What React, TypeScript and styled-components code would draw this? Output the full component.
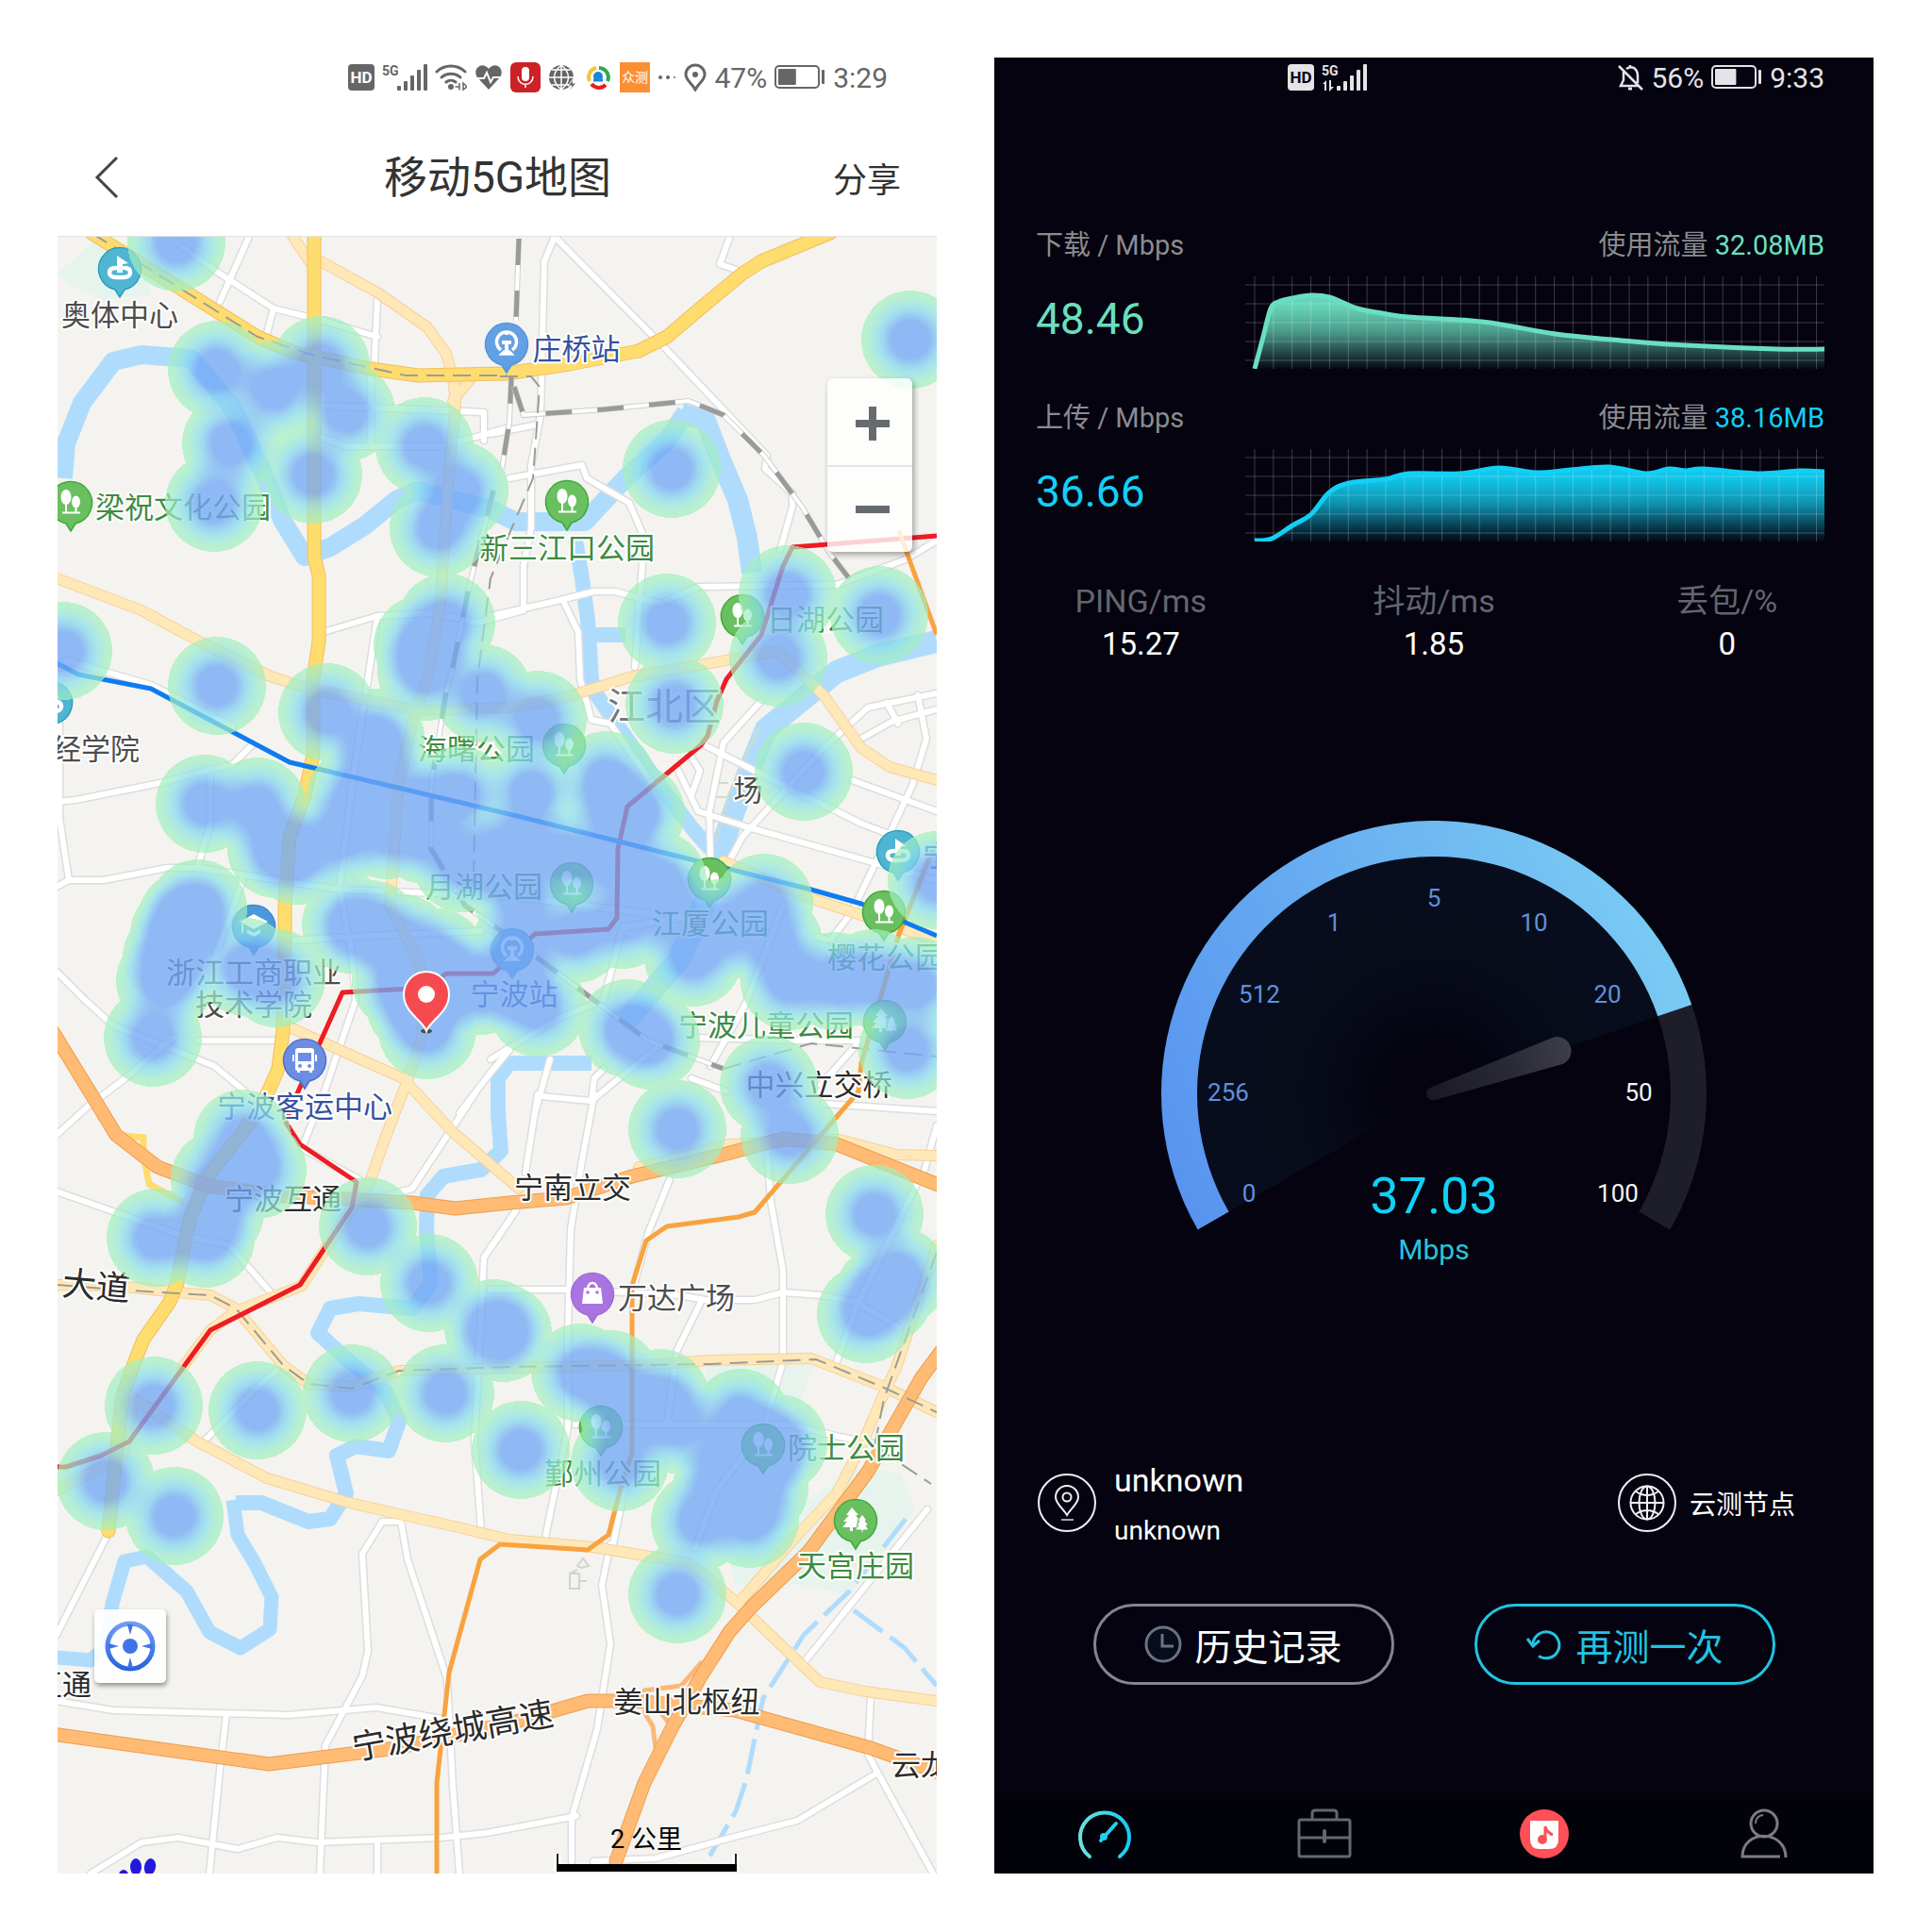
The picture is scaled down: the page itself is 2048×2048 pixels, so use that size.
import React from 'react';
import styled, { createGlobalStyle } from 'styled-components';

type Point = [number, number];
type PinKind = 'sport' | 'station' | 'tree' | 'pine' | 'school' | 'bus' | 'bag';

const GREEN = '#3d8b40';
const NAVY = '#3550a0';
const DARK = '#2b2b2b';
const GREY = '#4d4d4d';

const WATER = [
  { w: 20, d: '67,507 70,470 87,427 120,383 150,376 203,380 247,433 277,497 300,553 323,590 350,580 387,557 420,530 443,520 520,540 547,553 620,553 663,507 707,467 727,437' },
  { w: 22, d: '722,438 748,446 765,490 782,530 792,570 797,607' },
  { w: 16, d: '610,573 617,613 623,657 627,720 630,733 653,767 700,833 733,877 753,900' },
  { w: 16, d: '630,673 663,673' },
  { w: 24, d: '993,680 930,695 887,712 850,742 812,773 793,820 778,860 767,893 750,950 720,1017 663,1083' },
  { w: 16, d: '627,1127 540,1127 528,1143 528,1180 531,1220 510,1240 470,1247 453,1267 452,1303 457,1360 437,1387 380,1382 350,1387 337,1413 370,1443 410,1477 423,1507 412,1538 377,1533 357,1543 367,1583 350,1610 327,1613 277,1593 250,1593' },
  { w: 15, d: '247,1590 252,1627 270,1657 288,1693 286,1727 255,1747 222,1730 198,1687 156,1650 132,1655 119,1700 113,1745 96,1760 60,1757' },
];

const STREAMS = ['960,1610 900,1687 852,1733 809,1800 791,1887 780,1920 749,1973', '905,1707 959,1747 993,1787'];

const STREETS = [
  '263,253 233,320', '187,257 233,290 290,327 343,340 400,357', '290,327 282,357', '400,317 397,383',
  '343,430 513,437 513,467', '340,463 367,473 470,473 540,453', '393,400 393,473',
  '343,670 400,653 460,650 507,660 555,647', '400,653 390,720 373,833 360,940 373,1013 377,1060 343,1160 320,1217',
  '587,253 577,277 573,440 563,493 563,560 555,600 555,647', '590,253 703,367 813,483 811,497 840,523 840,537 827,583',
  '773,253 763,280 783,287', '520,460 570,450', '540,507 617,493 622,507 667,533 683,570 673,707',
  '520,653 590,637 630,627 652,627 700,640 740,622 887,620 960,593 993,573', '597,637 613,670 615,720 627,763 647,767 690,830',
  '717,813 740,860 793,877 993,933', '747,790 800,817 887,860 913,873 950,887', '733,803 742,817 733,843',
  '753,907 752,860 767,787 807,743', '773,913 787,887 873,793 920,750 993,735', '940,745 952,767',
  '973,737 982,783 967,833 940,890 903,967 880,997 867,993', '913,783 945,765 993,752', '903,827 993,860',
  '520,1123 590,1080 640,1060 660,983 740,970', '627,1167 700,1107', '567,1180 583,1123', '573,1162 627,1167 630,1143 640,1133',
  '733,1143 770,1157', '740,1100 847,1103 910,1103', '870,1150 910,1105', '873,1170 993,1178', '753,1130 790,1065 830,960',
  '60,850 80,848 170,830 247,810 267,790', '63,767 63,867 73,933', '60,940 73,933 110,933 177,920 210,920 360,943 540,950 700,970',
  '223,823 223,873 210,917', '70,700 160,726 247,770', '60,1030 90,1060 120,1087 170,1107 227,1130 260,1157', '210,1103 290,1103',
  '93,1173 133,1143 183,1100', '257,933 227,1017', '310,997 370,993 510,987', '540,1113 520,1137 487,1180',
  '503,1160 437,1260 400,1270', '60,1203 93,1173', '60,1263 193,1310 243,1320 287,1370', '320,1217 380,1250',
  '217,1527 273,1470 293,1453', '547,1283 513,1333 510,1393 503,1527 510,1623', '405,1613 384,1647 390,1750 384,1777 345,1850 339,1986',
  '405,1613 425,1613 432,1653 474,1780 480,1893 487,1986', '60,1803 120,1813 306,1818 399,1810 474,1823', '240,1817 234,1867 222,1986',
  '96,1986 150,1953 189,1948 252,1960 294,1948 336,1953 468,1948 516,1943 611,1925', '400,1950 400,1986',
  '647,1637 638,1680 647,1743 633,1833 606,1927 606,1973', '983,1600 854,1760', '923,1797 920,1860 989,1986',
  '929,1880 845,1930 779,1947 695,1970 629,1973', '114,1627 60,1733', '570,1160 557,1243',
  '630,1160 617,1230 605,1303 602,1413 602,1513 578,1630', '710,1250 687,1307 670,1370', '520,1323 547,1283',
  '520,1367 603,1367 720,1373 747,1378 800,1378 830,1370 870,1373 907,1380 953,1407', '743,1380 717,1433 707,1510',
  '813,1220 817,1273 830,1347 830,1443 810,1513 760,1580 737,1640', '973,1253 910,1380 887,1443', '993,1193 980,1240',
  '663,1573 650,1637', '610,1510 837,1510 890,1523 925,1530',
];

const CREAM = [
  '340,277 400,310 453,347 473,375 480,400 483,427 477,490 472,557 467,640 453,720 440,753 422,833 417,917 413,960 443,1017 452,1050 447,1100 430,1150 407,1210 392,1253',
  '310,250 330,280', '60,613 150,647 217,683 287,717 327,730 393,743 440,753 540,750 597,740 667,718 753,703 825,690 873,737 913,793 943,813 993,827',
  '303,1087 360,1113 427,1143 480,1200 550,1260', '60,1362 123,1363 188,1370 223,1373 250,1387 300,1447 327,1467 373,1470 423,1453 540,1450 687,1447 753,1442 860,1440 937,1470 993,1497',
  '392,1253 373,1280 320,1363 250,1390 223,1410 193,1450', '60,1580 130,1543 143,1483', '143,1483 207,1527 283,1567 370,1593 490,1620 540,1632 629,1640 731,1657 779,1697 869,1783 917,1793 993,1803',
  '993,1320 950,1450 937,1477 913,1533 887,1583 840,1633 785,1697', '767,913 853,950 913,970 993,997', '677,1237 773,1213 890,1208 950,1224 993,1225', '480,425 500,400',
];

const YELLOW = [
  '333,245 333,590 338,610 338,680 332,720 332,800 323,843 307,887 302,960 302,990 300,1093 295,1133 283,1160 267,1187 220,1247 203,1287 197,1310 188,1360 180,1380 152,1420 143,1443 130,1480 123,1543 115,1623',
  '97,247 193,307 273,357 310,373 393,391 443,398 537,396 603,386 677,372 707,357 747,323 787,290 807,277 880,247',
];

const HIGHWAYS = [
  '55,1092 103,1170 123,1203 167,1237 220,1257 293,1267 437,1275 483,1281 540,1275 600,1270 670,1247 770,1223 830,1207 887,1213 997,1257',
  '997,1433 977,1460 920,1560 857,1645 797,1703 773,1730 743,1777 713,1830 683,1890 653,1973',
  '55,1838 285,1870 420,1853 540,1827 623,1803 671,1803 779,1813 923,1853 998,1880',
];

const RAMPS = ['683,1792 722,1787 743,1763', '683,1815 692,1830 695,1853', '700,1815 712,1830'];

const RAILS = [
  '550,253 547,340', '542,400 540,447 532,497', '523,520 497,623 480,707 473,733 457,833 457,900 493,960 540,993 580,1023 643,1070 687,1103 767,1133',
  '545,410 555,440 640,434 730,425 767,440 810,483 850,537 880,587 900,613',
];

const THIN_RAILS = [
  '97,247 193,307 273,357 330,376 430,398 537,398', '530,399 563,399 572,410 565,507 520,613 506,720 502,930',
  '60,1362 123,1367 188,1371 223,1373 250,1387 300,1447 327,1467 373,1472 423,1453 540,1449 753,1446 865,1441 937,1471 993,1497',
  '993,1327 937,1483 927,1533 987,1573', '767,1133 860,1106 993,1120',
];

const METRO = [
  { color: '#ee1c25', w: 5, d: '993,568 840,580 830,600 807,673 770,720 760,743 750,780 743,790 713,815 665,855 655,900 654,973 645,985 567,990 523,1032 473,1032 453,1047 363,1052 308,1175 303,1190 318,1213 378,1253 373,1280 318,1362 223,1410 137,1528 107,1543 70,1555 60,1555' },
  { color: '#f9a33f', w: 5, d: '953,563 993,673' },
  { color: '#f9a33f', w: 5, d: '993,890 953,990 913,1127 910,1157 800,1285 783,1290 707,1300 685,1315 670,1363 670,1540 660,1570 645,1627 623,1643 530,1637 509,1653 476,1773 463,1890 463,1986' },
  { color: '#0f7bf0', w: 5, d: '60,703 83,715 160,730 307,808 540,863 740,913 860,943 913,958 993,992' },
];

const PARKS = ['60,290 100,255 150,262 160,312 110,318 70,300', '750,1447 863,1447 847,1490 745,1482', '915,1555 955,1562 970,1600 935,1650 900,1690 850,1680 780,1680 770,1640'];

const LABELS: { t: string; x: number; y: number; c: string; s?: number; a?: 'start' | 'end'; r?: number }[] = [
  { t: '奥体中心', x: 127, y: 345, c: GREY },
  { t: '梁祝文化公园', x: 194, y: 549, c: GREEN },
  { t: '庄桥站', x: 611, y: 381, c: NAVY },
  { t: '新三江口公园', x: 601, y: 592, c: GREEN },
  { t: '日湖公园', x: 875, y: 668, c: GREEN },
  { t: '海曙公园', x: 505, y: 805, c: GREEN },
  { t: '江北区', x: 704, y: 763, c: '#777', s: 40 },
  { t: '场', x: 793, y: 849, c: GREY },
  { t: '经学院', x: 148, y: 805, c: GREY, a: 'end' },
  { t: '月湖公园', x: 513, y: 951, c: GREEN },
  { t: '江厦公园', x: 753, y: 990, c: GREEN },
  { t: '浙江工商职业', x: 269, y: 1042, c: GREY },
  { t: '技术学院', x: 269, y: 1076, c: GREY },
  { t: '宁波站', x: 545, y: 1065, c: NAVY },
  { t: '宁波客运中心', x: 323, y: 1184, c: NAVY },
  { t: '宁波儿童公园', x: 812, y: 1098, c: GREEN },
  { t: '中兴立交桥', x: 868, y: 1161, c: DARK },
  { t: '樱花公园', x: 939, y: 1026, c: GREEN },
  { t: '宁', x: 978, y: 918, c: NAVY, a: 'start' },
  { t: '宁波互通', x: 300, y: 1282, c: DARK },
  { t: '宁南立交', x: 607, y: 1270, c: DARK },
  { t: '大道', x: 101, y: 1376, c: DARK, s: 36, r: 5 },
  { t: '万达广场', x: 717, y: 1387, c: GREY },
  { t: '鄞州公园', x: 639, y: 1573, c: GREEN },
  { t: '院士公园', x: 897, y: 1546, c: GREEN },
  { t: '天宫庄园', x: 907, y: 1671, c: GREEN },
  { t: '姜山北枢纽', x: 728, y: 1815, c: DARK },
  { t: '宁波绕城高速', x: 482, y: 1847, c: DARK, s: 36, r: -10 },
  { t: '云龙', x: 945, y: 1882, c: DARK, a: 'start' },
  { t: '互通', x: 97, y: 1797, c: DARK, a: 'end' },
];

const PINS: { k: PinKind; x: number; y: number }[] = [
  { k: 'sport', x: 127, y: 285 }, { k: 'station', x: 537, y: 365 }, { k: 'tree', x: 75, y: 533 },
  { k: 'tree', x: 601, y: 532 }, { k: 'tree', x: 787, y: 653 }, { k: 'tree', x: 598, y: 790 },
  { k: 'tree', x: 606, y: 937 }, { k: 'tree', x: 752, y: 932 }, { k: 'sport', x: 952, y: 903 },
  { k: 'tree', x: 937, y: 967 }, { k: 'station', x: 543, y: 1007 }, { k: 'pine', x: 938, y: 1083 },
  { k: 'school', x: 269, y: 982 }, { k: 'bus', x: 323, y: 1124 }, { k: 'sport', x: 54, y: 745 },
  { k: 'bag', x: 628, y: 1372 }, { k: 'tree', x: 637, y: 1513 }, { k: 'tree', x: 809, y: 1532 },
  { k: 'pine', x: 907, y: 1612 },
];

const PIN_COLORS: Record<PinKind, [string, string]> = {
  sport: ['#4fb5d2', '#2b9cbd'], station: ['#62a0e3', '#5592da'], tree: ['#6abf60', '#39ab36'], pine: ['#6abf60', '#39ab36'],
  school: ['#4a97dc', '#3a86cc'], bus: ['#6b8ee3', '#4b6fcb'], bag: ['#a974e0', '#9f6adb'],
};

const HEAT: Point[] = [
  [187, 257], [230, 392], [290, 413], [340, 387], [367, 437], [245, 470], [227, 533], [332, 503], [450, 473], [487, 520],
  [465, 560], [473, 660], [448, 683], [452, 712], [67, 690], [230, 727], [347, 755], [965, 360], [712, 497], [707, 660],
  [835, 630], [825, 697], [932, 652], [512, 735], [398, 782], [400, 810], [217, 852], [273, 855], [293, 900], [315, 907],
  [377, 845], [410, 880], [360, 887], [487, 843], [443, 850], [450, 885], [490, 915], [527, 912], [210, 963], [190, 990],
  [198, 975], [175, 1040], [182, 1015], [162, 1100], [372, 980], [393, 985], [427, 1000], [463, 1015], [425, 1040], [453, 1092],
  [440, 1065], [260, 1025], [293, 1037], [510, 1045], [477, 1045], [570, 763], [563, 840], [715, 747], [852, 818], [643, 827],
  [653, 860], [674, 862], [603, 907], [653, 917], [697, 933], [553, 895], [660, 975], [610, 990], [553, 950], [553, 1000],
  [545, 1043], [570, 1068], [712, 967], [810, 957], [770, 983], [735, 1015], [820, 1000], [837, 1040], [885, 1040], [925, 1037],
  [970, 1045], [962, 1113], [993, 933], [665, 1090], [690, 1103], [815, 1150], [718, 1197], [837, 1203], [927, 1287], [953, 1353],
  [937, 1372], [918, 1393], [523, 1408], [533, 1413], [615, 1455], [647, 1462], [700, 1482], [667, 1500], [717, 1510], [785, 1503],
  [825, 1530], [810, 1537], [770, 1545], [657, 1550], [552, 1537], [742, 1613], [795, 1610], [805, 1577], [765, 1577], [718, 1690],
  [257, 1207], [273, 1240], [233, 1250], [165, 1312], [218, 1313], [228, 1285], [390, 1300], [455, 1360], [163, 1490], [273, 1495],
  [373, 1477], [472, 1477], [112, 1570], [185, 1607],
];

// intensity -> colour ramp of the heat layer
const RAMP: { at: number; rgb: [number, number, number] }[] = [
  { at: 0, rgb: [164, 240, 186] },
  { at: 0.04, rgb: [160, 238, 196] },
  { at: 0.14, rgb: [138, 222, 236] },
  { at: 0.24, rgb: [125, 192, 243] },
  { at: 0.34, rgb: [114, 167, 245] },
  { at: 1, rgb: [114, 167, 245] },
];

function rampTable(channel: 0 | 1 | 2) {
  const out: string[] = [];
  for (let i = 0; i <= 50; i++) {
    const v = i / 50;
    const k = Math.max(1, RAMP.findIndex((s) => s.at >= v));
    const a = RAMP[k - 1];
    const b = RAMP[k];
    const t = (v - a.at) / (b.at - a.at);
    out.push(((a.rgb[channel] + (b.rgb[channel] - a.rgb[channel]) * t) / 255).toFixed(3));
  }
  return out.join(' ');
}

// hard outer edge, then slightly more opaque towards the hot cores
const MASK_TABLE = Array.from({ length: 200 }, (_, i) =>
  i < 1 ? 0 : (0.7 + 0.08 * Math.min(1, i / 60)).toFixed(3)
).join(' ');

function PinGlyph({ kind }: { kind: PinKind }) {
  switch (kind) {
    case 'tree':
      return (
        <g fill="#fff">
          <ellipse cx="-5" cy="-6" rx="5.5" ry="8" />
          <ellipse cx="5.5" cy="-1" rx="4.5" ry="6.5" />
          <path d="M-6 0h2v10h-2zM4.500 3h2v7h-2zM-9 9.500h19v2h-19z" />
        </g>
      );
    case 'pine':
      return (
        <g fill="#fff">
          <path d="M-4-14l7 8h-3l5 7h-4l5 6h-9v4h-3v-4h-8l5-6h-4l6-7h-3z" />
          <path d="M7-7l5 7h-2l4 5h-3l3 5h-6v3h-2v-3h-7l4-5h-2l3-5h-2z" stroke="#5fb655" strokeWidth="1" />
        </g>
      );
    case 'sport':
      return (
        <g>
          <path d="M-4-1c-5 0-7 2-7 5s3 5 7 5h8c4 0 7-2 7-5s-2-5-6-5" fill="none" stroke="#fff" strokeWidth="4.500" strokeLinecap="round" />
          <path d="M-3 4V-14l12 8-6 1v9z" fill="#fff" />
        </g>
      );
    case 'station':
      return (
        <g fill="none" stroke="#fff" strokeWidth="3.500">
          <path d="M-6 6a10.500 10.500 0 1 1 12 0" />
          <path d="M-5-2H5M0-1V8" strokeWidth="4" />
          <path d="M-7 11L-3 7H3L7 11z" fill="#fff" strokeWidth="1.500" />
          <path d="M0-10v-4" />
        </g>
      );
    case 'school':
      return (
        <g fill="#fff">
          <path d="M0-13L15-5 0 3-15-5z" />
          <path d="M-7 3l7 4 7-4v4l-7 4-7-4zM-13-3h2V7h-2z" />
        </g>
      );
    case 'bus':
      return (
        <g>
          <path d="M-7-13H7q3 0 3 3V9q0 2-2 2v2H5v-2H-5v2h-3v-2q-2 0-2-2V-10q0-3 3-3z" fill="#fff" />
          <path d="M-12-6v7M12-6v7" stroke="#fff" strokeWidth="2" />
          <rect x="-7" y="-8" width="14" height="9" fill="#6b8ee3" />
          <circle cx="-5" cy="6" r="2" fill="#6b8ee3" />
          <circle cx="5" cy="6" r="2" fill="#6b8ee3" />
        </g>
      );
    default:
      return (
        <g>
          <path d="M-9-7H9l2 17h-22z" fill="#fff" />
          <path d="M-5-6a5 6 0 0 1 10 0" fill="none" stroke="#fff" strokeWidth="2.500" />
          <circle cx="-5" cy="-2" r="1.800" fill="#a974e0" />
          <circle cx="5" cy="-2" r="1.800" fill="#a974e0" />
        </g>
      );
  }
}

function Lines({ items, color, width }: { items: string[]; color: string; width: number }) {
  return (
    <g fill="none" stroke={color} strokeWidth={width} strokeLinejoin="round" strokeLinecap="round">
      {items.map((d) => (
        <polyline key={d} points={d} />
      ))}
    </g>
  );
}

function CoverageMap() {
  return (
    <MapCanvas viewBox="61 251 932 1735" role="img" aria-label="移动5G地图">
      <defs>
        <radialGradient id="spot">
          <stop offset="0" stopColor="#fff" stopOpacity="0.5" />
          <stop offset="0.38" stopColor="#fff" stopOpacity="0.34" />
          <stop offset="0.55" stopColor="#fff" stopOpacity="0.2" />
          <stop offset="0.7" stopColor="#fff" stopOpacity="0.12" />
          <stop offset="0.85" stopColor="#fff" stopOpacity="0.055" />
          <stop offset="0.95" stopColor="#fff" stopOpacity="0.022" />
          <stop offset="1" stopColor="#fff" stopOpacity="0.012" />
        </radialGradient>
        <filter id="heat" filterUnits="userSpaceOnUse" x="0" y="190" width="1060" height="1860" colorInterpolationFilters="sRGB">
          <feColorMatrix in="SourceGraphic" type="matrix" values="0 0 0 1 0  0 0 0 1 0  0 0 0 1 0  0 0 0 0 1" />
          <feComponentTransfer result="tint">
            <feFuncR type="table" tableValues={rampTable(0)} />
            <feFuncG type="table" tableValues={rampTable(1)} />
            <feFuncB type="table" tableValues={rampTable(2)} />
          </feComponentTransfer>
          <feComponentTransfer in="SourceGraphic" result="mask">
            <feFuncA type="discrete" tableValues={MASK_TABLE} />
          </feComponentTransfer>
          <feComposite in="tint" in2="mask" operator="in" />
        </filter>
      </defs>

      <rect x="61" y="251" width="932" height="1735" fill="#f4f3ef" />
      {PARKS.map((d) => (
        <polygon key={d} points={d} fill="#e7f4ee" />
      ))}
      <g fill="none" stroke="#afdcfd" strokeLinejoin="round">
        {WATER.map((r) => (
          <polyline key={r.d} points={r.d} strokeWidth={r.w} />
        ))}
        {STREAMS.map((d) => (
          <polyline key={d} points={d} strokeWidth="5" strokeDasharray="38 10" />
        ))}
      </g>
      <path d="M806 768l-34 75-14 52M800 780l-26 60M762 810l-8 62 20-8M760 830h12M758 845h12" fill="none" stroke="#cfdccb" strokeWidth="2" />
      <path d="M612 1660l6-8 6 8-8 2zM604 1668h10v16h-10zM612 1664l-8 4M614 1676h8" fill="none" stroke="#cfd6cb" strokeWidth="2" />

      <Lines items={STREETS} color="#dddddf" width={9} />
      <Lines items={STREETS} color="#ffffff" width={6} />
      <Lines items={CREAM} color="#f7cf98" width={12} />
      <Lines items={CREAM} color="#ffe8b8" width={10} />
      <Lines items={YELLOW} color="#f3bd5c" width={15} />
      <Lines items={YELLOW} color="#ffdc6e" width={13} />
      <polyline points="132,1204 152,1206 152,1225 158,1255 195,1275" fill="none" stroke="#ffdc6e" strokeWidth="7" />
      <Lines items={RAMPS} color="#fcb877" width={5} />
      <Lines items={HIGHWAYS} color="#ee9d4e" width={15} />
      <Lines items={HIGHWAYS} color="#ffbb73" width={13} />

      <g fill="none">
        {RAILS.map((d) => (
          <React.Fragment key={d}>
            <polyline points={d} stroke="#cfcfcf" strokeWidth="6" />
            <polyline points={d} stroke="#fff" strokeWidth="4" />
            <polyline points={d} stroke="#9a9a9a" strokeWidth="5" strokeDasharray="28 27" />
          </React.Fragment>
        ))}
        {THIN_RAILS.map((d) => (
          <polyline key={d} points={d} stroke="#9c9c96" strokeWidth="2" strokeDasharray="19 9" />
        ))}
        {METRO.map((m) => (
          <polyline key={m.d} points={m.d} stroke={m.color} strokeWidth={m.w} strokeLinejoin="round" />
        ))}
      </g>

      {PINS.map((p) => (
        <g key={`${p.x}-${p.y}`} transform={`translate(${p.x} ${p.y})`}>
          <path
            d="M0 30L-5 22A22.500 22.500 0 1 1 5 22z"
            fill={PIN_COLORS[p.k][0]}
            stroke={PIN_COLORS[p.k][1]}
            strokeWidth="1.500"
          />
          <PinGlyph kind={p.k} />
        </g>
      ))}

      {LABELS.map((l) => (
        <MapLabel
          key={`${l.t}-${l.x}`}
          x={l.x}
          y={l.y}
          fill={l.c}
          fontSize={l.s ?? 31}
          textAnchor={l.a ?? 'middle'}
          transform={l.r ? `rotate(${l.r} ${l.x} ${l.y})` : undefined}
        >
          {l.t}
        </MapLabel>
      ))}

      <g filter="url(#heat)">
        {HEAT.map(([x, y]) => (
          <circle key={`${x}-${y}`} cx={x} cy={y} r="52" fill="url(#spot)" />
        ))}
      </g>

      <g transform="translate(452 1054)">
        <ellipse cx="0" cy="39" rx="6" ry="2.500" fill="#3f5257" />
        <path d="M0 39C-3 28-24 20-24 0a24 24 0 0 1 48 0C24 20 3 28 0 39z" fill="#f54b50" stroke="#fff" strokeWidth="2" />
        <circle r="9" fill="#fff" />
      </g>

      <g fill="#2319dc">
        <ellipse cx="144" cy="1979" rx="6" ry="9" />
        <ellipse cx="159" cy="1979" rx="6" ry="9" transform="rotate(10 159 1979)" />
        <ellipse cx="131" cy="1988" rx="5" ry="6" />
      </g>
      <path d="M591 1965v16h189v-16" fill="none" stroke="#fff" strokeWidth="7" />
      <path d="M591 1965v16M780 1965v16" stroke="#222" strokeWidth="2" />
      <path d="M590 1980h191" stroke="#000" strokeWidth="8" />
      <text x="685" y="1959" fontSize="27" textAnchor="middle">2 公里</text>
    </MapCanvas>
  );
}

function HdIcon({ bg, fg }: { bg: string; fg: string }) {
  return (
    <svg width="28" height="28" viewBox="0 0 28 28">
      <rect width="28" height="28" rx="4" fill={bg} />
      <text x="14" y="20" fontSize="17" fontWeight="700" textAnchor="middle" fill={fg}>HD</text>
    </svg>
  );
}

function SignalIcon({ color, data }: { color: string; data?: boolean }) {
  return (
    <svg width="48" height="30" viewBox="0 0 48 30" fill={color}>
      <text x="0" y="13" fontSize="14" fontWeight="700">5G</text>
      {data && <path d="M1 22l4-4v11H3v-7zM8 18h2v7h3l-5 5z" />}
      <rect x="16" y="24" width="4" height="5" rx="1" />
      <rect x="23" y="19" width="4" height="10" rx="1" />
      <rect x="30" y="13" width="4" height="16" rx="1" />
      <rect x="37" y="7" width="4" height="22" rx="1" />
      <rect x="44" y="1" width="4" height="28" rx="1" />
    </svg>
  );
}

function BatteryIcon({ color, level }: { color: string; level: number }) {
  return (
    <svg width="54" height="26" viewBox="0 0 54 26">
      <rect x="1" y="1" width="46" height="23" rx="4" fill="none" stroke={color} strokeWidth="2" />
      <rect x="4" y="4" width={40 * level} height="17" rx="1" fill={color} />
      <rect x="50" y="5" width="3" height="15" rx="1" fill={color} />
    </svg>
  );
}

function MapStatusIcons() {
  const c = '#666';
  return (
    <>
      <HdIcon bg={c} fg="#fff" />
      <SignalIcon color={c} />
      <svg width="34" height="30" viewBox="0 0 34 30" fill="none" stroke={c} strokeWidth="3" strokeLinecap="round">
        <path d="M2 9a22 22 0 0 1 30 0M7 15a15 15 0 0 1 20 0M12 20a8 8 0 0 1 10 0" />
        <circle cx="17" cy="25" r="1.500" fill={c} />
        <path d="M22 25h4v-4v7M30 21v7l4-3z" strokeWidth="1.500" />
      </svg>
      <svg width="30" height="28" viewBox="0 0 30 28">
        <path d="M15 27L3 14C-3 5 8-4 15 5 22-4 33 5 27 14z" fill={c} />
        <path d="M0 15h10l3-6 4 10 3-5h10" fill="none" stroke="#fff" strokeWidth="2" />
      </svg>
      <svg width="32" height="32" viewBox="0 0 32 32">
        <rect width="32" height="32" rx="6" fill="#cc2127" />
        <rect x="12" y="5" width="8" height="15" rx="4" fill="#fff" />
        <path d="M8 15c0 11 16 11 16 0M16 23v4" fill="none" stroke="#fff" strokeWidth="1.500" />
      </svg>
      <svg width="32" height="30" viewBox="0 0 32 30">
        <circle cx="14" cy="15" r="13" fill={c} />
        <path d="M1 15h26M4 7h20M4 23h20M14 2v26M14 2c-10 8-10 18 0 26M14 2c10 8 10 18 0 26" fill="none" stroke="#fff" strokeWidth="1.500" />
        <path d="M27 16l-6 8h4l-3 6 8-9h-4z" fill={c} stroke="#fff" strokeWidth="1" />
      </svg>
      <svg width="28" height="28" viewBox="0 0 28 28" fill="none" strokeWidth="4">
        <path d="M14 4a10 10 0 0 1 9 14" stroke="#2fa84a" />
        <path d="M21 22a10 10 0 0 1-15-1" stroke="#e2231a" />
        <path d="M4 18A10 10 0 0 1 11 4" stroke="#f7c531" />
        <circle cx="13" cy="13" r="5" fill="#1b87d6" />
        <path d="M8 17h10" stroke="#1b87d6" strokeWidth="3" />
      </svg>
      <svg width="32" height="32" viewBox="0 0 32 32">
        <rect width="32" height="32" fill="#fb8f34" />
        <text x="16" y="21" fontSize="14" textAnchor="middle" fill="#fff">众测</text>
      </svg>
      <svg width="20" height="28" viewBox="0 0 20 28" fill={c}>
        <circle cx="3" cy="14" r="2" />
        <circle cx="11" cy="14" r="2" />
        <circle cx="18" cy="14" r="1" />
      </svg>
      <svg width="24" height="30" viewBox="0 0 24 30">
        <path d="M12 28C9 22 2 18 2 12a10 10 0 0 1 20 0c0 6-7 10-10 16z" fill="none" stroke={c} strokeWidth="3" />
        <circle cx="12" cy="12" r="3" fill={c} />
      </svg>
    </>
  );
}

// Catmull-Rom spline through the samples
function smooth(points: Point[]) {
  let d = `M${points[0].join(' ')}`;
  for (let i = 0; i < points.length - 1; i++) {
    const p0 = points[i - 1] ?? points[i];
    const p1 = points[i];
    const p2 = points[i + 1];
    const p3 = points[i + 2] ?? p2;
    d += `C${p1[0] + (p2[0] - p0[0]) / 6} ${p1[1] + (p2[1] - p0[1]) / 6} ${p2[0] - (p3[0] - p1[0]) / 6} ${p2[1] - (p3[1] - p1[1]) / 6} ${p2[0]} ${p2[1]}`;
  }
  return d;
}

const SERIES: { id: string; title: string; value: string; used: string; color: string; points: Point[] }[] = [
  {
    id: 'down', title: '下载 / Mbps', value: '48.46', used: '32.08MB', color: '#6adfc0',
    points: [[10, 98], [19, 64], [27, 34], [35, 27], [50, 23], [70, 20], [89, 22], [119, 34], [145, 39], [173, 43], [251, 48], [329, 61], [389, 67], [449, 72], [563, 77], [614, 77]],
  },
  {
    id: 'up', title: '上传 / Mbps', value: '36.66', used: '38.16MB', color: '#12d0f5',
    points: [[10, 97], [28, 95], [50, 81], [70, 69], [89, 46], [110, 36], [149, 32], [173, 26], [227, 26], [269, 20], [308, 25], [345, 22], [386, 19], [425, 26], [449, 21], [467, 23], [486, 21], [545, 26], [587, 23], [614, 24]],
  },
];

const GRID_COLS = Array.from({ length: 31 }, (_, i) => 10 + i * 19.85);
const GRID_ROWS = [9, 29, 49, 69, 89];

function SpeedChart({ id, color, points }: { id: string; color: string; points: Point[] }) {
  const line = smooth(points);
  return (
    <ChartSvg viewBox="0 0 614 98" preserveAspectRatio="none">
      <defs>
        <linearGradient id={`fill-${id}`} x1="0" y1="0.15" x2="0" y2="1">
          <stop offset="0" stopColor={color} stopOpacity="0.95" />
          <stop offset="0.4" stopColor={color} stopOpacity="0.7" />
          <stop offset="1" stopColor={color} stopOpacity="0.02" />
        </linearGradient>
      </defs>
      <path d={`${line}V98H10z`} fill={`url(#fill-${id})`} />
      <g stroke="#fff" strokeOpacity="0.22" strokeWidth="1">
        {GRID_COLS.map((x) => <path key={x} d={`M${x} 0V98`} />)}
        {GRID_ROWS.map((y) => <path key={y} d={`M0 ${y}H614`} />)}
      </g>
      <path d={line} fill="none" stroke={color} strokeWidth="5" strokeLinejoin="round" />
    </ChartSvg>
  );
}

const STATS = [
  { label: 'PING/ms', value: '15.27' },
  { label: '抖动/ms', value: '1.85' },
  { label: '丢包/%', value: '0' },
];

const TICKS: { t: string; x: number; y: number; off?: boolean }[] = [
  { t: '0', x: -196, y: 115 }, { t: '256', x: -218, y: 8 }, { t: '512', x: -185, y: -96 },
  { t: '1', x: -106, y: -172 }, { t: '5', x: 0, y: -198 }, { t: '10', x: 106, y: -172 },
  { t: '20', x: 184, y: -96 }, { t: '50', x: 217, y: 8, off: true }, { t: '100', x: 195, y: 115, off: true },
];

function polar(r: number, deg: number) {
  const a = (deg * Math.PI) / 180;
  return `${(r * Math.cos(a)).toFixed(2)} ${(-r * Math.sin(a)).toFixed(2)}`;
}

function ring(from: number, to: number, outer = 289, inner = 251) {
  const large = from - to > 180 ? 1 : 0;
  return `M${polar(outer, from)}A${outer} ${outer} 0 ${large} 1 ${polar(outer, to)}L${polar(inner, to)}A${inner} ${inner} 0 ${large} 0 ${polar(inner, from)}z`;
}

function Gauge() {
  return (
    <GaugeSvg viewBox="-300 -300 600 500">
      <defs>
        <linearGradient id="arc" gradientUnits="userSpaceOnUse" x1="-260" y1="150" x2="280" y2="-90">
          <stop offset="0" stopColor="#5893ef" />
          <stop offset="1" stopColor="#79cbf3" />
        </linearGradient>
        <radialGradient id="sweep" gradientUnits="userSpaceOnUse" cx="0" cy="0" r="251">
          <stop offset="0.15" stopColor="#080d1b" stopOpacity="0" />
          <stop offset="0.6" stopColor="#080d1c" stopOpacity="0.9" />
          <stop offset="1" stopColor="#080d1e" />
        </radialGradient>
        <linearGradient id="needle" x1="0" x2="1">
          <stop offset="0" stopColor="#191922" />
          <stop offset="0.6" stopColor="#2b2b36" />
          <stop offset="1" stopColor="#3d3e49" />
        </linearGradient>
      </defs>
      <path d={`M0 0L${polar(251, 210)}A251 251 0 1 1 ${polar(251, 19)}z`} fill="url(#sweep)" />
      <path d={ring(19, -30)} fill="#1e1e29" />
      <path d={ring(210, 19)} fill="url(#arc)" />
      <g transform="rotate(-19)">
        <path d="M-1-7L138-15A15 15 0 0 1 138 15L-1 7A7 7 0 0 1-1-7z" fill="url(#needle)" />
      </g>
      <g fontSize="26" textAnchor="middle">
        {TICKS.map((k) => (
          <text key={k.t} x={k.x} y={k.y} fill={k.off ? '#f4f4f6' : '#6190dd'}>{k.t}</text>
        ))}
      </g>
      <text x="0" y="127" fontSize="54" textAnchor="middle" fill="#12d0f5">37.03</text>
      <text x="0" y="176" fontSize="30" textAnchor="middle" fill="#2cc3dc">Mbps</text>
    </GaugeSvg>
  );
}

export default function App() {
  return (
    <>
      <GlobalStyle />
      <Page>
        <MapScreen>
          <StatusBar>
            <MapStatusIcons />
            <span>47%</span>
            <BatteryIcon color="#666" level={0.47} />
            <span>3:29</span>
          </StatusBar>
          <TitleBar>
            <BackButton type="button" aria-label="返回">
              <svg width="26" height="46" viewBox="0 0 26 46" fill="none" stroke="#444" strokeWidth="3">
                <path d="M24 2L3 23l21 21" />
              </svg>
            </BackButton>
            <Title>移动5G地图</Title>
            <ShareButton type="button">分享</ShareButton>
          </TitleBar>
          <MapArea>
            <CoverageMap />
            <ZoomControl>
              <ZoomButton type="button" aria-label="放大">
                <svg width="38" height="38" viewBox="0 0 38 38" stroke="#666b70" strokeWidth="8">
                  <path d="M1 19h36M19 1v36" />
                </svg>
              </ZoomButton>
              <ZoomButton type="button" aria-label="缩小">
                <svg width="38" height="38" viewBox="0 0 38 38" stroke="#666b70" strokeWidth="8">
                  <path d="M1 19h36" />
                </svg>
              </ZoomButton>
            </ZoomControl>
            <LocateButton type="button" aria-label="定位">
              <svg width="54" height="54" viewBox="0 0 54 54">
                <defs>
                  <linearGradient id="locate" x1="0" y1="0" x2="0" y2="1">
                    <stop offset="0" stopColor="#6f9cf5" />
                    <stop offset="1" stopColor="#2a63dc" />
                  </linearGradient>
                </defs>
                <circle cx="27" cy="27" r="24" fill="none" stroke="url(#locate)" strokeWidth="5" />
                <circle cx="27" cy="27" r="8" fill="#3f74e6" />
                <path d="M24 4h6l-3 11zM24 50h6l-3-11zM4 24v6l11-3zM50 24v6l-11-3z" fill="#3f74e6" />
              </svg>
            </LocateButton>
          </MapArea>
        </MapScreen>

        <SpeedScreen>
          <SpeedStatus>
            <StatusGroup>
              <HdIcon bg="#e3e3e8" fg="#04030f" />
              <SignalIcon color="#e3e3e8" data />
            </StatusGroup>
            <StatusGroup>
              <svg width="28" height="28" viewBox="0 0 28 28" fill="none" stroke="#e3e3e8" strokeWidth="2.500">
                <path d="M7 8v9l-3 6h18M10 5q4-3 8-1 4 3 4 8v8M14 1v3M2 2l25 25" />
                <path d="M12 26h4" strokeWidth="3" />
              </svg>
              <span>56%</span>
              <BatteryIcon color="#e3e3e8" level={0.56} />
              <span>9:33</span>
            </StatusGroup>
          </SpeedStatus>

          <Metrics>
            {SERIES.map((s) => (
              <section key={s.id}>
                <MetricHead>
                  <span>{s.title}</span>
                  <span>
                    使用流量 <Accent $color={s.color}>{s.used}</Accent>
                  </span>
                </MetricHead>
                <MetricBody>
                  <MetricValue $color={s.color}>{s.value}</MetricValue>
                  <SpeedChart id={s.id} color={s.color} points={s.points} />
                </MetricBody>
              </section>
            ))}
          </Metrics>

          <Stats>
            {STATS.map((s) => (
              <div key={s.label}>
                <StatLabel>{s.label}</StatLabel>
                <StatValue>{s.value}</StatValue>
              </div>
            ))}
          </Stats>

          <GaugeArea>
            <Gauge />
          </GaugeArea>

          <NodeRow>
            <NodeItem $gap={18}>
              <svg width="64" height="64" viewBox="0 0 64 64" fill="none" stroke="#f0f0f2" strokeWidth="2">
                <circle cx="32" cy="32" r="30" />
                <path d="M32 45C28 38 20 33 20 26a12 12 0 0 1 24 0c0 7-8 12-12 19z" />
                <circle cx="32" cy="26" r="4.500" />
                <path d="M26 50h13" stroke="#a5a5ac" />
              </svg>
              <div>
                <NodeName>unknown</NodeName>
                <NodeDetail>unknown</NodeDetail>
              </div>
            </NodeItem>
            <NodeItem $gap={13}>
              <svg width="64" height="64" viewBox="0 0 64 64" fill="none" stroke="#f0f0f2" strokeWidth="2">
                <circle cx="32" cy="32" r="30" />
                <circle cx="32" cy="32" r="17.500" />
                <ellipse cx="32" cy="32" rx="8.500" ry="17.500" />
                <path d="M14.500 32h35M32 14v36M20 20q12 8 24 0M20 44q12-8 24 0" />
              </svg>
              <NodeLabel>云测节点</NodeLabel>
            </NodeItem>
          </NodeRow>

          <Actions>
            <PillButton type="button" $border="#85858c" $color="#ffffff">
              <svg width="40" height="40" viewBox="0 0 40 40" fill="#070d1c" stroke="#6d7280" strokeWidth="3">
                <circle cx="20" cy="20" r="18" />
                <path d="M19 9v13h12" fill="none" />
              </svg>
              历史记录
            </PillButton>
            <PillButton type="button" $border="#22c3e2" $color="#22c3e2">
              <svg width="40" height="40" viewBox="0 0 40 40" fill="none" stroke="#22c3e2" strokeWidth="3">
                <path d="M8 19a14 14 0 1 1 7 14" strokeLinecap="round" />
                <path d="M2 14l6 8 7-6" />
              </svg>
              再测一次
            </PillButton>
          </Actions>

          <TabBar>
            <TabButton type="button" aria-label="测速" aria-current="page">
              <svg width="60" height="54" viewBox="0 0 60 54" fill="none" stroke="url(#tab)" strokeWidth="4" strokeLinecap="round">
                <defs>
                  <linearGradient id="tab">
                    <stop offset="0" stopColor="#6fe0dc" />
                    <stop offset="1" stopColor="#16cbf2" />
                  </linearGradient>
                </defs>
                <path d="M14 51a26 26 0 1 1 32 0" />
                <path d="M26 34L42 16" stroke="#22d0ee" />
                <circle cx="29" cy="30" r="3" fill="#22d0ee" stroke="#22d0ee" strokeWidth="2" />
              </svg>
            </TabButton>
            <TabButton type="button" aria-label="工具箱">
              <svg width="60" height="54" viewBox="0 0 60 54" fill="none" stroke="#66666d" strokeWidth="3">
                <rect x="3" y="12" width="54" height="39" rx="2" />
                <path d="M17 12V5q0-3 3-3h20q3 0 3 3v7M3 31h54" />
                <path d="M30 24v11" strokeWidth="4" strokeLinecap="round" />
              </svg>
            </TabButton>
            <TabButton type="button" aria-label="音乐">
              <svg width="54" height="54" viewBox="0 0 54 54">
                <circle cx="27" cy="27" r="26" fill="#ff4f57" />
                <path d="M12 13h30v20q0 10-10 10H22q-10 0-10-10z" fill="#fff" />
                <circle cx="25" cy="33" r="5" fill="#ff4f57" />
                <path d="M28 33V19q1 6 8 9" fill="none" stroke="#ff4f57" strokeWidth="3" />
              </svg>
            </TabButton>
            <TabButton type="button" aria-label="我的">
              <svg width="54" height="54" viewBox="0 0 54 54" fill="none" stroke="#7b7b80" strokeWidth="3">
                <circle cx="27" cy="16" r="14" />
                <path d="M50 52C50 22 4 22 4 51h40" />
                <path d="M18 16q0-8 8-9" strokeWidth="2" />
              </svg>
            </TabButton>
          </TabBar>
        </SpeedScreen>
      </Page>
    </>
  );
}

const GlobalStyle = createGlobalStyle`
  * {
    box-sizing: border-box;
  }

  body {
    margin: 0;
    background: #fff;
    font-family: Roboto, 'Noto Sans CJK SC', sans-serif;
  }

  button {
    font-family: inherit;
    border: none;
    background: none;
    padding: 0;
    cursor: pointer;
  }

  svg {
    flex-shrink: 0;
  }
`;

const Page = styled.main`
  display: grid;
  grid-template-columns: 1fr 1fr;
  gap: 61px;
  min-height: 100vh;
  padding: 61px 62px 62px 61px;
`;

const MapScreen = styled.section`
  display: flex;
  flex-direction: column;
  min-width: 0;
`;

const StatusBar = styled.div`
  display: flex;
  align-items: center;
  justify-content: flex-end;
  gap: 8px;
  height: 42px;
  padding-right: 52px;
  font-size: 30px;
  color: #666;
`;

const TitleBar = styled.header`
  display: grid;
  grid-template-columns: 1fr auto 1fr;
  align-items: center;
  height: 148px;
  padding: 22px 38px 0 39px;
  border-bottom: 1px solid #e2e2e2;
  color: #333;
`;

const BackButton = styled.button`
  justify-self: start;
  display: flex;
`;

const Title = styled.h1`
  margin: 0;
  font-size: 46px;
  line-height: 64px;
  font-weight: 400;
`;

const ShareButton = styled.button`
  justify-self: end;
  font-size: 36px;
  color: #333;
`;

const MapArea = styled.div`
  position: relative;
  flex: 1;
  overflow: hidden;
  background: #f4f3ef;
`;

const MapCanvas = styled.svg`
  display: block;
  width: 100%;
  height: auto;
`;

const MapLabel = styled.text`
  stroke: #fff;
  stroke-width: 4px;
  stroke-linejoin: round;
  paint-order: stroke;
`;

const ZoomControl = styled.div`
  position: absolute;
  top: 150px;
  right: 26px;
  display: flex;
  flex-direction: column;
  width: 90px;
  border-radius: 6px;
  background: rgba(255, 255, 255, 0.8);
  box-shadow: 2px 3px 6px rgba(0, 0, 0, 0.35);
`;

const ZoomButton = styled.button`
  display: flex;
  align-items: center;
  justify-content: center;
  height: 92px;
  padding: 3px 0 0 6px;

  & + & {
    padding-top: 0;
    border-top: 2px solid #e4e4e4;
  }
`;

const LocateButton = styled.button`
  position: absolute;
  left: 39px;
  bottom: 202px;
  display: flex;
  align-items: center;
  justify-content: center;
  width: 76px;
  height: 78px;
  border-radius: 5px;
  background: rgba(255, 255, 255, 0.9);
  box-shadow: 1px 3px 5px rgba(0, 0, 0, 0.4);
`;

const SpeedScreen = styled.section`
  display: flex;
  flex-direction: column;
  min-width: 0;
  background: #04030f;
  color: #fff;
`;

const SpeedStatus = styled.div`
  display: flex;
  align-items: center;
  justify-content: space-between;
  height: 42px;
  padding: 0 52px 0 311px;
  font-size: 30px;
  color: #e3e3e8;
`;

const StatusGroup = styled.div`
  display: flex;
  align-items: center;
  gap: 8px;
`;

const Metrics = styled.div`
  display: flex;
  flex-direction: column;
  gap: 35px;
  padding: 140px 52px 0 44px;
`;

const MetricHead = styled.div`
  display: flex;
  justify-content: space-between;
  font-size: 29px;
  line-height: 34px;
  color: #8b8b90;
`;

const Accent = styled.span<{ $color: string }>`
  color: ${(p) => p.$color};
`;

const MetricBody = styled.div`
  display: flex;
  align-items: center;
  height: 98px;
  margin-top: 16px;
`;

const MetricValue = styled.strong<{ $color: string }>`
  flex: 0 0 222px;
  padding-bottom: 8px;
  font-size: 46px;
  font-weight: 400;
  color: ${(p) => p.$color};
`;

const ChartSvg = styled.svg`
  flex: 1;
  min-width: 0;
  height: 98px;
`;

const Stats = styled.div`
  display: grid;
  grid-template-columns: repeat(3, 1fr);
  margin-top: 41px;
  text-align: center;
  line-height: 45px;
`;

const StatLabel = styled.div`
  font-size: 34px;
  color: #65656c;
`;

const StatValue = styled.div`
  font-size: 33px;
`;

const GaugeArea = styled.div`
  display: flex;
  flex: 1;
  align-items: center;
  justify-content: center;
  padding-bottom: 34px;
`;

const GaugeSvg = styled.svg`
  width: 100%;
  max-width: 600px;
  height: auto;
`;

const NodeRow = styled.div`
  display: flex;
  align-items: center;
  justify-content: space-between;
  padding: 0 83px 0 45px;
`;

const NodeItem = styled.div<{ $gap: number }>`
  display: flex;
  align-items: center;
  gap: ${(p) => p.$gap}px;
`;

const NodeName = styled.div`
  font-size: 34px;
  line-height: 44px;
`;

const NodeDetail = styled.div`
  margin-top: 16px;
  font-size: 28px;
  line-height: 32px;
`;

const NodeLabel = styled.span`
  font-size: 28px;
`;

const Actions = styled.div`
  display: flex;
  justify-content: center;
  gap: 85px;
  margin: 61px 0 116px;
`;

const PillButton = styled.button<{ $border: string; $color: string }>`
  display: flex;
  align-items: center;
  justify-content: center;
  gap: 13px;
  width: 319px;
  height: 86px;
  border: 3px solid ${(p) => p.$border};
  border-radius: 43px;
  font-size: 39px;
  color: ${(p) => p.$color};
`;

const TabBar = styled.nav`
  display: grid;
  grid-template-columns: repeat(4, 1fr);
  height: 84px;
  background: #02020a;
`;

const TabButton = styled.button`
  display: flex;
  align-items: center;
  justify-content: center;
`;
